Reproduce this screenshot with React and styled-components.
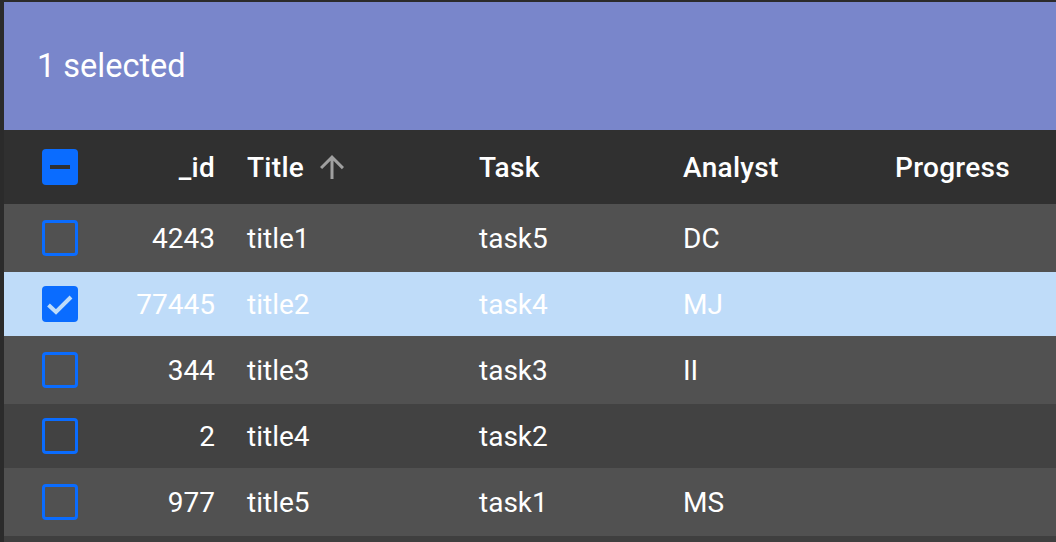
import React from 'react';
import styled, { createGlobalStyle } from 'styled-components';

const GlobalStyle = createGlobalStyle`
  html, body {
    margin: 0;
    padding: 0;
    background: #2b2b2b;
    font-family: Roboto, "Noto Sans", Arial, sans-serif;
  }
`;

const Page = styled.div`
  padding: 2px 0 0 4px;
  height: 542px;
  box-sizing: border-box;
  overflow: hidden;
  background: #2b2b2b;
`;

const Panel = styled.div`
  background: #3f3f3f;
  height: 100%;
`;

const Toolbar = styled.div`
  height: 128px;
  background: #7986cb;
  display: flex;
  align-items: center;
  padding-left: 33px;
  color: #fff;
  font-size: 32.5px;
`;

const COLS = '88px 139px 232px 204px 212px 1fr';

const HeaderRow = styled.div`
  display: grid;
  grid-template-columns: ${COLS};
  height: 74px;
  align-items: center;
  background: #303030;
  color: #fff;
  font-size: 28px;
  font-weight: 500;
  letter-spacing: 0.3px;
`;

const Row = styled.div`
  display: grid;
  grid-template-columns: ${COLS};
  height: ${(p) => (p.$odd ? 68 : 64)}px;
  align-items: center;
  background: ${(p) => (p.$selected ? '#bfdcf9' : p.$odd ? '#515151' : '#424242')};
  color: #fff;
  font-size: 28px;
`;

const Cell = styled.div`
  padding: 0 16px;
  display: flex;
  align-items: center;
  justify-content: ${(p) => (p.$right ? 'flex-end' : 'flex-start')};
  white-space: nowrap;
`;

const BoxCell = styled.div`
  padding-left: 38px;
  display: flex;
  align-items: center;
`;

const Box = styled.div`
  width: 36px;
  height: 36px;
  box-sizing: border-box;
  border-radius: 4px;
  border: ${(p) => (p.$filled ? 'none' : '3.5px solid #0a6cff')};
  background: ${(p) => (p.$filled ? '#0a6cff' : 'transparent')};
  display: flex;
  align-items: center;
  justify-content: center;
`;

const SortIcon = styled.svg`
  width: 36px;
  height: 36px;
  margin-left: 10px;
  color: #a0a0a0;
`;

const rows = [
  { id: 4243, title: 'title1', task: 'task5', analyst: 'DC' },
  { id: 77445, title: 'title2', task: 'task4', analyst: 'MJ', selected: true },
  { id: 344, title: 'title3', task: 'task3', analyst: 'II' },
  { id: 2, title: 'title4', task: 'task2', analyst: '' },
  { id: 977, title: 'title5', task: 'task1', analyst: 'MS' },
];

const Check = ({ state }) => {
  if (state === 'some') {
    return (
      <Box $filled>
        <svg width="36" height="36" viewBox="0 0 36 36">
          <rect x="8" y="16" width="20" height="4" fill="#303030" />
        </svg>
      </Box>
    );
  }
  if (state === 'on') {
    return (
      <Box $filled>
        <svg width="36" height="36" viewBox="0 0 36 36">
          <path d="M6.5 19 L14 26 L29 11" fill="none" stroke="#bfdcf9" strokeWidth="4" />
        </svg>
      </Box>
    );
  }
  return <Box />;
};

export default function App() {
  return (
    <>
      <GlobalStyle />
      <Page>
        <Panel>
          <Toolbar>1 selected</Toolbar>
          <HeaderRow>
            <BoxCell>
              <Check state="some" />
            </BoxCell>
            <Cell $right>_id</Cell>
            <Cell>
              Title
              <SortIcon viewBox="0 0 24 24">
                <path fill="currentColor" d="M4 12l1.41 1.41L11 7.83V20h2V7.83l5.58 5.59L20 12l-8-8-8 8z" />
              </SortIcon>
            </Cell>
            <Cell>Task</Cell>
            <Cell>Analyst</Cell>
            <Cell>Progress</Cell>
          </HeaderRow>
          {rows.map((r, i) => (
            <Row key={r.id} $odd={i % 2 === 0} $selected={r.selected}>
              <BoxCell>
                <Check state={r.selected ? 'on' : 'off'} />
              </BoxCell>
              <Cell $right>{r.id}</Cell>
              <Cell>{r.title}</Cell>
              <Cell>{r.task}</Cell>
              <Cell>{r.analyst}</Cell>
              <Cell />
            </Row>
          ))}
        </Panel>
      </Page>
    </>
  );
}
